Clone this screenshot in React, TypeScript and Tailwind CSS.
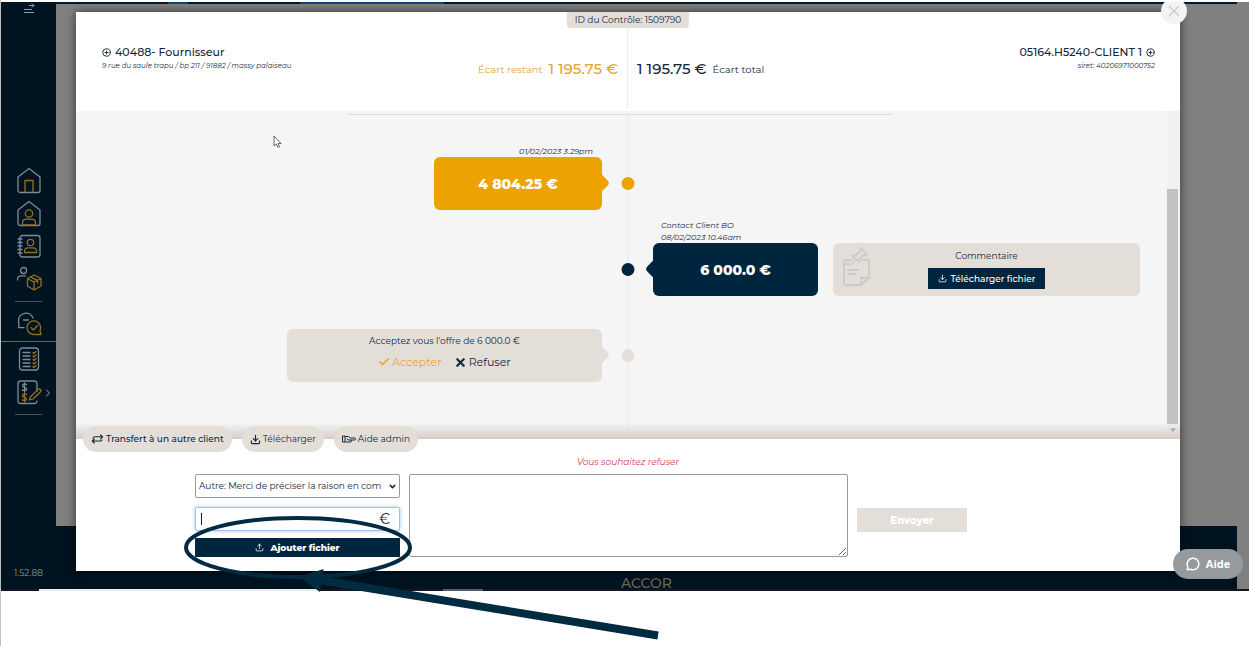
import React from 'react';
import { ChevronDown, ChevronRight, CirclePlus, Check, Download, MessageCircle, Upload, X } from 'lucide-react';
import { clsx } from 'clsx';

const LINE = '#7d8b97';
const GOLD = '#93701f';

interface NavIconProps {
  label: string;
  children: React.ReactNode;
}

const NavIcon: React.FC<NavIconProps> = ({ label, children }) => (
  <a href="#" aria-label={label} className="block">
    <svg width="26" height="27" viewBox="0 0 26 27" fill="none" stroke={LINE} strokeWidth="1.3" strokeLinecap="round" strokeLinejoin="round">
      {children}
    </svg>
  </a>
);

const HOUSE = 'M2 10 L13 1.5 L24 10 V23.5 a2 2 0 0 1 -2 2 H4 a2 2 0 0 1 -2 -2 Z';

const Sidebar: React.FC = () => (
  <nav className="flex w-[55px] shrink-0 flex-col items-center bg-[#001320] pb-2">
    <button type="button" aria-label="Menu" className="mt-px">
      <svg width="12" height="12" viewBox="0 0 12 12" fill="none" stroke="#93a0aa" strokeWidth="1">
        <path d="M1 9.5 H11 M1 6.5 H9 M6 2.5 H11 M9 0.500 L11 2.500 L9 4.500" />
      </svg>
    </button>
    <div className="mt-38 flex flex-col items-center gap-1.5">
      <NavIcon label="Accueil">
        <path d={HOUSE} />
        <path d="M9 25 V13.5 H17 V25" stroke={GOLD} />
      </NavIcon>
      <NavIcon label="Clients">
        <path d={HOUSE} />
        <circle cx="13" cy="13.5" r="3.7" stroke={GOLD} />
        <path d="M6.5 25 V23 A4 4 0 0 1 10.5 19.2 H15.5 A4 4 0 0 1 19.5 23 V25 Z" stroke={GOLD} />
      </NavIcon>
      <NavIcon label="Contacts">
        <rect x="4" y="2.5" width="20" height="21.5" rx="2.5" />
        <path d="M2 6 H6 M2 9.5 H6 M2 13 H6 M2 16.5 H6 M2 20 H6" />
        <circle cx="14.5" cy="9.5" r="3.2" stroke={GOLD} />
        <path d="M8.5 19.5 V18 A3.5 3.5 0 0 1 12 14.8 H17 A3.5 3.5 0 0 1 20.5 18 V19.5 Z" stroke={GOLD} />
      </NavIcon>
      <NavIcon label="Fournisseurs">
        <circle cx="7.5" cy="4.5" r="3" />
        <path d="M1.5 14 V13 A3.5 3.5 0 0 1 5 9.8 H9.5" />
        <path d="M18 9 L25 12.5 V20 L18 24 L11.5 20 V12.5 Z M11.5 12.5 L18 16 L25 12.5 M18 16 V24 M14.5 10.8 L21.5 14.3 V17" stroke={GOLD} />
      </NavIcon>
    </div>
    <hr className="mt-2 w-[27px] border-[#44525d]" />
    <div className="mt-2">
      <NavIcon label="Contrôles">
        <path d="M8 17.5 C6.5 17.5 5 18 2.5 17.5 C4 15.5 2.5 14.5 2.5 10.5 A7.5 7.5 0 0 1 17 8 M7.5 10 H12.5" />
        <path d="M25 24.5 H18 A6.8 6.8 0 1 1 24 20.5 Z M15 17.5 L17.5 20 L21.5 15.5" stroke={GOLD} />
      </NavIcon>
    </div>
    <hr className="mt-1 w-full border-[#7d661c]" />
    <div className="mt-1 flex flex-col items-center gap-1.5">
      <NavIcon label="Listes">
        <rect x="3.5" y="2" width="19" height="22" rx="3" />
        <path d="M7 6.5 H14 M7 10 H14 M7 13.5 H14 M7 17 H14 M7 20.5 H14" />
        <path d="M17 6.5 l1 1 l2 -2 M17 10 l1 1 l2 -2 M17 13.5 l1 1 l2 -2 M17 17 l1 1 l2 -2 M17 20.5 l1 1 l2 -2" stroke={GOLD} />
      </NavIcon>
      <div className="relative">
        <NavIcon label="Factures">
          <path d="M21 12 V4.500 A2.500 2.500 0 0 0 18.500 2 H4.500 A2.500 2.500 0 0 0 2 4.500 V22 A2.500 2.500 0 0 0 4.500 24.500 H18.500 A2.500 2.500 0 0 0 21 22" />
          <path d="M10.500 5.500 C9 4.500 6.500 5 6.500 6.700 C6.500 8.700 10.700 7.800 10.700 10 C10.700 11.700 8 12 6.300 10.900 M8.500 4 V13" />
          <path d="M10.500 15.500 C9 14.500 6.500 15 6.500 16.700 C6.500 18.700 10.700 17.800 10.700 20 C10.700 21.700 8 22 6.300 20.900 M8.500 14 V23" stroke={GOLD} />
          <path d="M13.500 21 L14.500 17.800 L22 10.500 A1.600 1.600 0 0 1 24.500 12.800 L17 20 Z" stroke={GOLD} />
        </NavIcon>
        <ChevronRight size={12} className="absolute -right-3 top-2 text-[#9aa6b0]" />
      </div>
    </div>
    <hr className="mt-2 w-[27px] border-[#44525d]" />
    <span className="mt-auto text-[9px] leading-4 text-[#8a959d]">1.52.88</span>
  </nav>
);

// Dimmed application that sits behind the dialog
const Backdrop: React.FC = () => (
  <div className="absolute inset-0 flex flex-col">
    <div className="flex min-h-0 flex-1">
      <Sidebar />
      <div className="flex min-w-0 flex-1 flex-col">
        <div className="flex h-0.5 bg-[#03192b]">
          <span className="ml-28 w-5 bg-[#0f4474]" />
          <span className="ml-28 w-36 bg-[#0f4474]" />
        </div>
        <div className="flex-1 bg-[#808080]" />
        <footer className="flex h-[63px] items-end justify-center bg-[#001320]">
          <span className="text-sm font-medium leading-3 text-[#6d6850]">ACCOR</span>
        </footer>
      </div>
      <div className="w-3 bg-[#808080]" />
    </div>
    <div className="flex h-0.5 bg-[#151523]">
      <span className="ml-[38px] w-[280px] bg-[#e9eef5]" />
      <span className="ml-[124px] w-10 bg-[#545a68]" />
    </div>
  </div>
);

const DialogHeader: React.FC = () => (
  <header className="relative grid grid-cols-2 bg-white pb-0.5">
    <div className="flex h-[97px] justify-between border-r border-[#ececec] pl-[26px] pr-[9px]">
      <div className="pt-8">
        <h2 className="flex items-center gap-1 text-[11px] font-medium leading-4">
          <CirclePlus size={9} strokeWidth={2.5} /> 40488- Fournisseur
        </h2>
        <p className="text-[7px] italic leading-3">9 rue du saule trapu / bp 211 / 91882 / massy palaiseau</p>
      </div>
      <p className="flex items-center gap-1.5 pt-[18px] text-[10px] text-[#e6a42f]">
        Écart restant <strong className="text-[15px] font-medium">1 195.75 €</strong>
      </p>
    </div>
    <div className="flex justify-between pl-[9px] pr-[25px]">
      <p className="flex items-center gap-1.5 pt-[18px] text-[10px]">
        <strong className="text-[15px] font-medium">1 195.75 €</strong> Écart total
      </p>
      <div className="pt-8 text-right">
        <h2 className="flex items-center gap-1 text-[11px] font-medium leading-4">
          05164.H5240-CLIENT 1 <CirclePlus size={9} strokeWidth={2.5} />
        </h2>
        <p className="text-[7px] italic leading-3">siret: 40206971000752</p>
      </div>
    </div>
    <span className="absolute left-1/2 top-0 -translate-x-1/2 rounded-b bg-[#e2deda] px-2 text-[9px] leading-4">ID du Contrôle: 1509790</span>
  </header>
);

interface BubbleProps {
  side: 'left' | 'right';
  tone: 'gold' | 'navy' | 'sand';
  className?: string;
  children: React.ReactNode;
}

const tones = {
  gold: 'bg-[#eca200]',
  navy: 'bg-[#00263f]',
  sand: 'bg-[#e3dfd8]',
};

const Bubble: React.FC<BubbleProps> = ({ side, tone, className, children }) => (
  <div className={clsx('relative flex h-[53px] flex-col items-center justify-center rounded-md', tones[tone], className)}>
    <span
      className={clsx(
        'absolute top-[18px] size-4 rotate-45 rounded-sm',
        tones[tone],
        side === 'left' ? '-right-[5px]' : '-left-[5px]'
      )}
    />
    {children}
  </div>
);

const Dot: React.FC<{ tone: 'gold' | 'navy' | 'sand' }> = ({ tone }) => (
  <span className={clsx('absolute bottom-5 left-1/2 size-[13px] -translate-x-1/2 rounded-full', tones[tone])} />
);

const Timeline: React.FC = () => (
  <section className="relative bg-[#f5f5f5] pb-[57px] pt-[3px]">
    <span className="absolute inset-y-0 left-1/2 w-px -translate-x-1/2 bg-[#e9e9e9]" />
    <hr className="ml-[272px] mr-[287px] border-[#dedede]" />

    <div className="relative mt-[30px] grid grid-cols-2">
      <div className="flex flex-col items-end pr-[26px]">
        <p className="pr-[9px] text-[8px] italic leading-3">01/02/2023 3.29pm</p>
        <Bubble side="left" tone="gold" className="w-[168px]">
          <strong className="text-sm font-extrabold leading-5 text-white">4 804.25 €</strong>
        </Bubble>
      </div>
      <Dot tone="gold" />
    </div>

    <div className="relative mt-[9px] grid grid-cols-2">
      <div className="col-start-2 flex items-end gap-[15px] pl-[25px] pr-10">
        <div className="shrink-0">
          <p className="pl-2 text-[8px] italic leading-3">
            Contact Client BO
            <br />
            08/02/2023 10.46am
          </p>
          <Bubble side="right" tone="navy" className="w-[165px]">
            <strong className="text-sm font-extrabold leading-5 text-white">6 000.0 €</strong>
          </Bubble>
        </div>
        <div className="relative flex h-[53px] flex-1 flex-col items-center rounded-md bg-[#e3dfd8] pt-[5px] text-[9px] leading-4">
          <svg className="absolute left-2.5 top-1" width="28" height="40" viewBox="0 0 28 40" fill="none" stroke="#cbcbcb" strokeWidth="1.8" strokeLinejoin="round" strokeLinecap="round">
            <path d="M8 13 H3 A2 2 0 0 0 1 15 V36 A2 2 0 0 0 3 38 H18 L26 31 V15 A2 2 0 0 0 24 13 H19" />
            <path d="M18 38 V31 H26 M5 23 H15 M5 27 H12 M8 18 L12 13 M1 17 L6 17" />
            <path d="M17 1 L24 7 L22 8.500 L20.500 8 L16.500 12 V15 L9 9 L12.500 8.500 L17 4.500 Z" />
          </svg>
          <p>Commentaire</p>
          <button type="button" className="mt-1 flex h-[21px] items-center gap-1 bg-[#00263f] px-2.5 font-medium text-white">
            <Download size={9} /> Télécharger fichier
          </button>
        </div>
      </div>
      <Dot tone="navy" />
    </div>

    <div className="relative mt-[33px] grid grid-cols-2">
      <div className="flex justify-end pr-[26px]">
        <Bubble side="left" tone="sand" className="w-[315px] pb-2">
          <p className="text-[9px] leading-4">Acceptez vous l'offre de 6 000.0 €</p>
          <div className="mt-[5px] flex gap-3 text-[11px] leading-4">
            <button type="button" className="flex items-center gap-0.5 text-[#eba52c]">
              <Check size={12} strokeWidth={3.5} /> Accepter
            </button>
            <button type="button" className="flex items-center gap-0.5">
              <X size={13} strokeWidth={4} /> Refuser
            </button>
          </div>
        </Bubble>
      </div>
      <Dot tone="sand" />
    </div>

    {/* Scrollbar of the history */}
    <div className="absolute inset-y-0 right-0 flex w-[13px] flex-col items-start bg-[#f1f1f1]">
      <span className="mb-[15px] mt-auto h-[235px] w-[11px] bg-[#c1c1c1]" />
      <svg className="absolute bottom-1.5 left-0.5" width="8" height="5" viewBox="0 0 8 5">
        <path d="M1 0.500 H7 L4 4 Z" fill="#9b9b9b" />
      </svg>
    </div>
    <div className="absolute inset-x-0 bottom-0 h-4 bg-gradient-to-b from-transparent to-[#cdc2bc]/80" />

    <svg className="absolute left-[197px] top-6" width="9" height="14" viewBox="0 0 9 14">
      <path d="M1 1 V11 L3.300 9 L5 12.500 L6.500 11.800 L5 8.500 H8 Z" fill="#fff" stroke="#555" strokeWidth="0.900" />
    </svg>
  </section>
);

const pill = 'flex h-[26px] items-center rounded-full bg-[#e3dfd8] px-2';

const RefusalForm: React.FC = () => (
  <form className="relative bg-white pb-3.5 pt-[15px]" onSubmit={(e) => e.preventDefault()}>
    <div className="absolute -top-[13px] left-[7px] flex gap-2.5 text-[9px]">
      <button type="button" className={clsx(pill, 'gap-0.5 font-medium')}>
        <svg width="13" height="10" viewBox="0 0 13 10" fill="none" stroke="currentColor" strokeWidth="1.1" strokeLinecap="round" strokeLinejoin="round">
          <path d="M2 4.500 V4.500 A2 2 0 0 1 4 2.800 H11.500 M9.500 0.800 L11.700 2.800 L9.500 4.800" />
          <path d="M11 6 A2 2 0 0 1 9 7 H1.200 M3.400 5 L1.200 7 L3.400 9" />
        </svg>
        Transfert à un autre client
      </button>
      <button type="button" className={clsx(pill, 'gap-0.5')}>
        <Download size={11} strokeWidth={2.5} /> Télécharger
      </button>
      <button type="button" className={clsx(pill, 'gap-0.5')}>
        <svg width="14" height="9" viewBox="0 0 14 9" fill="none" stroke="currentColor" strokeWidth="1">
          <path d="M0.500 1 H3 V7 H0.500 Z M3 1.500 H6.500 L8.500 3 H12.500 A1 1 0 0 1 12.500 5 H8.500 M3 7 H8 A1 1 0 0 0 9 5 H6 L5 3.500" />
        </svg>
        Aide admin
      </button>
    </div>

    <p className="text-center text-[9px] italic leading-4 text-[#cf4257]">Vous souhaitez refuser</p>

    <div className="mt-1 flex gap-[9px] pl-[119px] pr-[213px]">
      <div className="flex w-[205px] shrink-0 flex-col">
        <div className="relative">
          <select aria-label="Raison du refus" className="block h-6 w-full appearance-none rounded-xs border border-[#9a9a9a] bg-white pl-[3px] pr-3 text-[9px]">
            <option>Autre: Merci de préciser la raison en com</option>
          </select>
          <ChevronDown size={9} strokeWidth={4} className="pointer-events-none absolute right-[3px] top-2" />
        </div>
        <div className="relative mt-[9px]">
          <input type="text" aria-label="Montant" className="block h-6 w-full rounded-xs border border-[#9fc3e8] bg-white px-1 text-xs shadow-[0_0_4px_#a9cdf0] outline-none" />
          <span className="absolute left-1.5 top-1.5 h-3 w-px bg-[#1b1b1b]" />
          <span className="absolute right-2.5 top-1 text-sm leading-4">€</span>
        </div>
        <button type="button" className="mt-[7px] flex h-[19px] items-center justify-center gap-1.5 bg-[#00263f] text-[9px] font-extrabold text-white">
          <Upload size={9} /> Ajouter fichier
        </button>
      </div>
      <textarea aria-label="Commentaire" className="block min-w-0 flex-1 resize rounded-xs border border-[#9a9a9a]" />
      <button type="submit" className="mt-[34px] h-6 w-[110px] shrink-0 bg-[#e3dfd8] text-[10px] font-extrabold text-white">
        Envoyer
      </button>
    </div>
  </form>
);

// Hand-drawn highlight around the upload button
const Annotation: React.FC = () => (
  <svg className="pointer-events-none absolute left-0 top-0" width="670" height="646" viewBox="1 0 670 646">
    <ellipse cx="298" cy="547.5" rx="112" ry="29.500" fill="none" stroke="#002b40" strokeWidth="4" />
    <path d="M322 580.500 L658 635.500" stroke="#002b40" strokeWidth="8" />
    <path d="M299 577 L323.500 569 L320 592 Z" fill="#002b40" />
  </svg>
);

export default function App() {
  return (
    <div className="relative min-h-screen border-l border-[#c0c0c0] bg-white pt-0.5 font-['Montserrat',Inter,sans-serif] text-[#14283a]">
      <div className="relative overflow-hidden pb-5 pl-[75px] pr-[69px] pt-2.5">
        <Backdrop />
        <div role="dialog" aria-label="Contrôle 1509790" className="relative shadow-[0_0_10px_rgba(0,0,0,0.6)]">
          <DialogHeader />
          <Timeline />
          <RefusalForm />
          <button type="button" aria-label="Fermer" className="absolute -right-[7px] -top-3.5 flex size-[26px] items-center justify-center rounded-full bg-[#f3f3f3] text-[#cccccc]">
            <X size={18} />
          </button>
        </div>
        <button type="button" className="absolute bottom-3 right-1.5 flex h-[30px] w-[70px] items-center justify-center gap-1.5 rounded-full bg-[#969a9e] font-['Open_Sans',sans-serif] text-[11px] font-bold text-white">
          <MessageCircle size={14} strokeWidth={2.5} /> Aide
        </button>
      </div>
      <Annotation />
    </div>
  );
}
